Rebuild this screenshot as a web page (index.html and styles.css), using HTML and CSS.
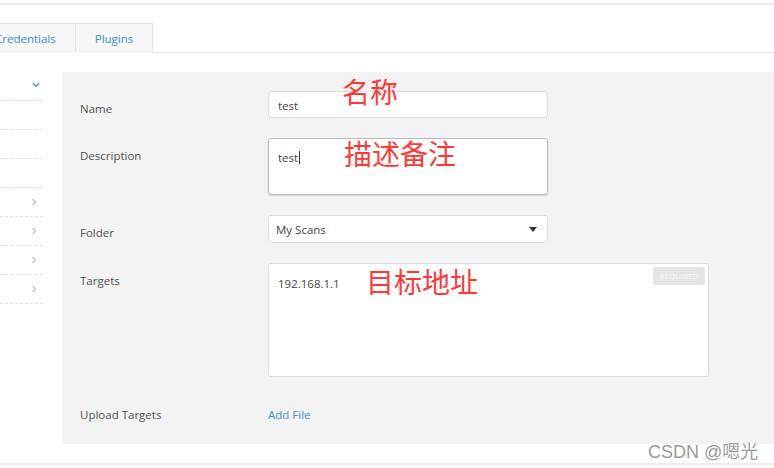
FILE: index.html
```html
<!DOCTYPE html>
<html lang="zh-CN">
<head>
<meta charset="utf-8">
<title>New Scan</title>
<link rel="stylesheet" href="styles.css">
</head>
<body>
<div class="page">
  <div class="topline"></div>
  <div class="tabs">
    <div class="tab tab-cred">Credentials</div>
    <div class="tab">Plugins</div>
  </div>
  <div class="main">
    <ul class="sidebar">
      <li class="side-row"><svg class="chev-down" width="8" height="6" viewBox="0 0 8 6"><path d="M1 1.2 L4 4.2 L7 1.2" fill="none" stroke="#4b9bbd" stroke-width="1.6"/></svg></li>
      <li class="side-row"></li>
      <li class="side-row"></li>
      <li class="side-row"></li>
      <li class="side-row"><svg class="chev-right" width="6" height="8" viewBox="0 0 6 8"><path d="M1.5 1 L4.5 4 L1.5 7" fill="none" stroke="#c4c4c4" stroke-width="1.4"/></svg></li>
      <li class="side-row"><svg class="chev-right" width="6" height="8" viewBox="0 0 6 8"><path d="M1.5 1 L4.5 4 L1.5 7" fill="none" stroke="#c4c4c4" stroke-width="1.4"/></svg></li>
      <li class="side-row"><svg class="chev-right" width="6" height="8" viewBox="0 0 6 8"><path d="M1.5 1 L4.5 4 L1.5 7" fill="none" stroke="#c4c4c4" stroke-width="1.4"/></svg></li>
      <li class="side-row"><svg class="chev-right" width="6" height="8" viewBox="0 0 6 8"><path d="M1.5 1 L4.5 4 L1.5 7" fill="none" stroke="#c4c4c4" stroke-width="1.4"/></svg></li>
    </ul>
    <div class="panel">
      <div class="label">Name</div>
      <div class="control">
        <div class="field field-input">test</div>
        <span class="note note-name">名称</span>
      </div>

      <div class="label">Description</div>
      <div class="control">
        <div class="field field-desc">test<span class="caret"></span></div>
        <span class="note note-desc">描述备注</span>
      </div>

      <div class="label">Folder</div>
      <div class="control">
        <div class="field field-select"><span>My Scans</span><span class="tri"></span></div>
      </div>

      <div class="label">Targets</div>
      <div class="control">
        <div class="field field-targets">192.168.1.1<span class="badge">REQUIRED</span></div>
        <span class="note note-targets">目标地址</span>
      </div>

      <div class="label">Upload Targets</div>
      <div class="control"><span class="link">Add File</span></div>
    </div>
  </div>
  <div class="bottomline"></div>
  <div class="watermark">CSDN @嗯光</div>
</div>
</body>
</html>
```

FILE: styles.css
```css
* { box-sizing: border-box; }
html, body { margin: 0; padding: 0; }
body {
  width: 774px;
  height: 468px;
  overflow: hidden;
  background: #fff;
  font-family: "Open Sans", "Noto Sans", sans-serif;
  font-size: 11.5px;
  color: #555;
}
.page {
  position: relative;
  padding-top: 3px;
  height: 468px;
}
.topline {
  height: 2px;
  background: #efefef;
}
.tabs {
  display: flex;
  margin-top: 18px;
  height: 30px;
  border-bottom: 1px solid #e4e4e4;
}
.tab {
  height: 30px;
  line-height: 29px;
  padding: 0 19px;
  background: #f6f6f6;
  border: 1px solid #e2e2e2;
  border-bottom: none;
  color: #3d8fd0;
  font-size: 11.5px;
}
.tab-cred {
  margin-left: -25px;
  border-right: none;
}
.main {
  display: flex;
  margin-top: 19px;
  gap: 19px;
}
.sidebar {
  list-style: none;
  margin: 0;
  padding: 0;
  width: 43px;
  flex: none;
}
.side-row {
  height: 29px;
  border-bottom: 1px dashed #e0e0e0;
  display: flex;
  align-items: center;
  justify-content: flex-end;
  padding-right: 6px;
}
.side-row:first-child { padding-right: 3px; }
.chev-down { margin-top: -2px; }
.panel {
  flex: 1;
  height: 372px;
  background: #f3f3f3;
  padding: 19px 0 0 18px;
  display: grid;
  grid-template-columns: 188px 1fr;
  grid-auto-rows: min-content;
  row-gap: 20px;
}
.label {
  padding-top: 10px;
  line-height: 16px;
  color: #505050;
}
.control {
  position: relative;
}
.field {
  position: relative;
  background: #fff;
  border: 1px solid #dcdcdc;
  border-radius: 3px;
  color: #444;
  padding-left: 9px;
}
.field-input {
  width: 280px;
  height: 27px;
  line-height: 27px;
}
.field-desc {
  width: 280px;
  height: 57px;
  padding-top: 11px;
  line-height: 16px;
  border-color: #b9b9b9;
  box-shadow: 0 1px 2px rgba(0,0,0,0.12);
}
.caret {
  display: inline-block;
  width: 1px;
  height: 13px;
  background: #333;
  vertical-align: -2px;
  margin-left: 1px;
}
.field-select {
  width: 280px;
  height: 28px;
  line-height: 28px;
  padding-left: 7px;
  display: flex;
  justify-content: space-between;
  align-items: center;
  padding-right: 10px;
}
.field-select span:first-child { margin-top: 2px; }
.tri {
  width: 0;
  height: 0;
  border-left: 4.5px solid transparent;
  border-right: 4.5px solid transparent;
  border-top: 5px solid #333;
}
.field-targets {
  width: 441px;
  height: 114px;
  padding-top: 12px;
  line-height: 16px;
}
.badge {
  position: absolute;
  top: 3px;
  right: 3px;
  width: 52px;
  height: 18px;
  line-height: 18px;
  text-align: center;
  background: #e4e4e4;
  color: #fafafa;
  font-size: 8px;
  border-radius: 2px;
}
.link {
  display: block;
  padding-top: 10px;
  line-height: 16px;
  color: #3d8fd0;
}
.note {
  position: absolute;
  color: #ff3838;
  font-family: "Noto Sans CJK SC", sans-serif;
  font-size: 28px;
  line-height: 30px;
  white-space: nowrap;
}
.note-name { left: 74px; top: -15px; }
.note-desc { left: 76px; top: 0px; }
.note-targets { left: 98px; top: 3px; }
.bottomline {
  position: absolute;
  left: 0;
  right: 0;
  top: 463px;
  height: 2px;
  background: #ececec;
}
.watermark {
  position: absolute;
  left: 648px;
  top: 437px;
  font-family: "Liberation Sans", "Noto Sans CJK SC", sans-serif;
  font-size: 18px;
  color: #9a9a9a;
  white-space: nowrap;
}
```
